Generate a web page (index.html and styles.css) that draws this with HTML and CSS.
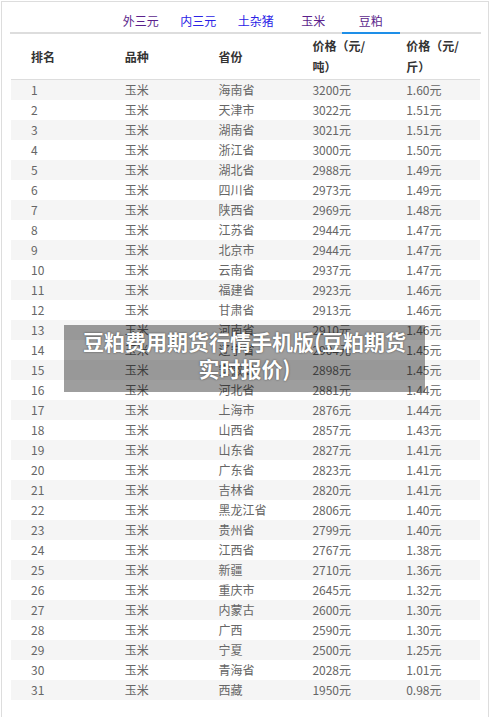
FILE: index.html
```html
<!DOCTYPE html>
<html lang="zh">
<head>
<meta charset="utf-8">
<link rel="stylesheet" href="styles.css">
</head>
<body>
<div class="page">
  <ul class="tabs">
    <li class="tab visited">外三元</li>
    <li class="tab">内三元</li>
    <li class="tab">土杂猪</li>
    <li class="tab visited">玉米</li>
    <li class="tab visited active">豆粕</li>
  </ul>
  <table class="prices">
    <colgroup><col><col><col><col><col></colgroup>
    <thead>
      <tr><th>排名</th><th>品种</th><th>省份</th><th>价格（元/吨）</th><th>价格（元/斤）</th></tr>
    </thead>
    <tbody>
      <tr><td>1</td><td>玉米</td><td>海南省</td><td>3200元</td><td>1.60元</td></tr>
      <tr><td>2</td><td>玉米</td><td>天津市</td><td>3022元</td><td>1.51元</td></tr>
      <tr><td>3</td><td>玉米</td><td>湖南省</td><td>3021元</td><td>1.51元</td></tr>
      <tr><td>4</td><td>玉米</td><td>浙江省</td><td>3000元</td><td>1.50元</td></tr>
      <tr><td>5</td><td>玉米</td><td>湖北省</td><td>2988元</td><td>1.49元</td></tr>
      <tr><td>6</td><td>玉米</td><td>四川省</td><td>2973元</td><td>1.49元</td></tr>
      <tr><td>7</td><td>玉米</td><td>陕西省</td><td>2969元</td><td>1.48元</td></tr>
      <tr><td>8</td><td>玉米</td><td>江苏省</td><td>2944元</td><td>1.47元</td></tr>
      <tr><td>9</td><td>玉米</td><td>北京市</td><td>2944元</td><td>1.47元</td></tr>
      <tr><td>10</td><td>玉米</td><td>云南省</td><td>2937元</td><td>1.47元</td></tr>
      <tr><td>11</td><td>玉米</td><td>福建省</td><td>2923元</td><td>1.46元</td></tr>
      <tr><td>12</td><td>玉米</td><td>甘肃省</td><td>2913元</td><td>1.46元</td></tr>
      <tr><td>13</td><td>玉米</td><td>河南省</td><td>2910元</td><td>1.46元</td></tr>
      <tr><td>14</td><td>玉米</td><td>辽宁省</td><td>2904元</td><td>1.45元</td></tr>
      <tr><td>15</td><td>玉米</td><td>安徽省</td><td>2898元</td><td>1.45元</td></tr>
      <tr><td>16</td><td>玉米</td><td>河北省</td><td>2881元</td><td>1.44元</td></tr>
      <tr><td>17</td><td>玉米</td><td>上海市</td><td>2876元</td><td>1.44元</td></tr>
      <tr><td>18</td><td>玉米</td><td>山西省</td><td>2857元</td><td>1.43元</td></tr>
      <tr><td>19</td><td>玉米</td><td>山东省</td><td>2827元</td><td>1.41元</td></tr>
      <tr><td>20</td><td>玉米</td><td>广东省</td><td>2823元</td><td>1.41元</td></tr>
      <tr><td>21</td><td>玉米</td><td>吉林省</td><td>2820元</td><td>1.41元</td></tr>
      <tr><td>22</td><td>玉米</td><td>黑龙江省</td><td>2806元</td><td>1.40元</td></tr>
      <tr><td>23</td><td>玉米</td><td>贵州省</td><td>2799元</td><td>1.40元</td></tr>
      <tr><td>24</td><td>玉米</td><td>江西省</td><td>2767元</td><td>1.38元</td></tr>
      <tr><td>25</td><td>玉米</td><td>新疆</td><td>2710元</td><td>1.36元</td></tr>
      <tr><td>26</td><td>玉米</td><td>重庆市</td><td>2645元</td><td>1.32元</td></tr>
      <tr><td>27</td><td>玉米</td><td>内蒙古</td><td>2600元</td><td>1.30元</td></tr>
      <tr><td>28</td><td>玉米</td><td>广西</td><td>2590元</td><td>1.30元</td></tr>
      <tr><td>29</td><td>玉米</td><td>宁夏</td><td>2500元</td><td>1.25元</td></tr>
      <tr><td>30</td><td>玉米</td><td>青海省</td><td>2028元</td><td>1.01元</td></tr>
      <tr><td>31</td><td>玉米</td><td>西藏</td><td>1950元</td><td>0.98元</td></tr>
    </tbody>
  </table>
  <div class="banner">豆粕费用期货行情手机版(豆粕期货实时报价)</div>
</div>
</body>
</html>
```
FILE: styles.css
```css
html, body {
  margin: 0;
  padding: 0;
  background: #fff;
}
body {
  font-family: "Noto Sans CJK SC", "Noto Sans", sans-serif;
  font-size: 12px;
  color: #666;
}
.page {
  position: relative;
  box-sizing: border-box;
  width: 488px;
  min-height: 720px;
  margin: 1px 0 0 1px;
  border: 1px solid #ddd;
  border-bottom: none;
  padding: 0 7px 0 8px;
}
.tabs {
  list-style: none;
  margin: 0;
  padding: 0 0 0 102px;
  display: flex;
  border-bottom: 2px solid #ddd;
  height: 30px;
}
.tab {
  width: 57.5px;
  text-align: center;
  padding-top: 11px;
  line-height: 16px;
  font-size: 12px;
  color: #2a22e6;
  box-sizing: border-box;
}
.tab.visited {
  color: #5b1f8c;
}
.tab.active {
  border-bottom: 2px solid #1e8fe8;
  height: 32px;
}
.prices {
  width: 469px;
  margin: 0 1px;
  border-collapse: collapse;
  table-layout: fixed;
}
.prices th {
  text-align: left;
  font-weight: bold;
  color: #333;
  font-size: 12px;
  line-height: 21px;
  padding: 1px 16px 2px 20px;
  height: 42px;
  border-bottom: 1px solid #ddd;
  vertical-align: middle;
}
.prices td {
  height: 20px;
  line-height: 20px;
  padding: 0 0 0 20px;
  white-space: nowrap;
}
.prices tbody tr:nth-child(odd) {
  background: #f5f5f5;
}
.banner {
  position: absolute;
  left: 62px;
  top: 323px;
  width: 361px;
  height: 67px;
  box-sizing: border-box;
  padding: 3px 14px 0;
  background: rgba(0, 0, 0, 0.38);
  color: #fff;
  font-weight: bold;
  font-size: 21px;
  line-height: 27px;
  text-align: center;
  text-shadow: 0 0 2px rgba(0, 0, 0, 0.6);
}
```
